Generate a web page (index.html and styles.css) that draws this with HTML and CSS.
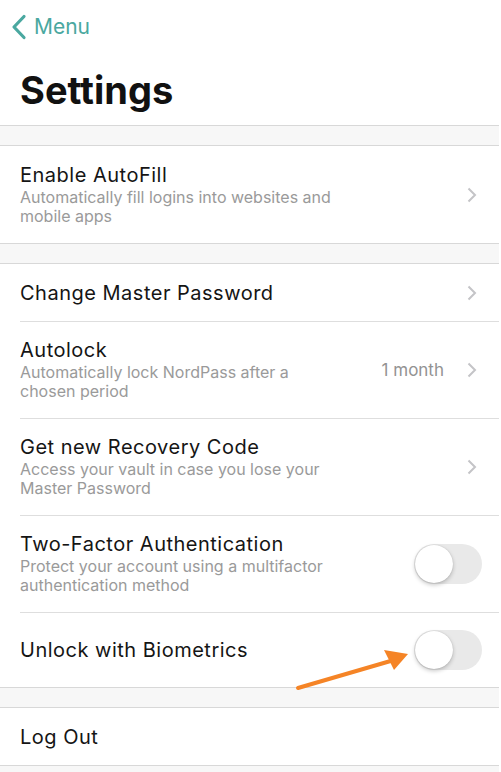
FILE: index.html
```html
<!DOCTYPE html>
<html>
<head>
<meta charset="utf-8">
<link rel="stylesheet" href="styles.css">
</head>
<body>
<div class="page">
  <header class="nav">
    <a class="back">
      <svg class="back-icon" width="16" height="26" viewBox="0 0 16 26"><path d="M13 2.5 L3 13 L13 23.5" fill="none" stroke="#4aa8a0" stroke-width="3.2" stroke-linecap="round" stroke-linejoin="round"/></svg>
      <span>Menu</span>
    </a>
    <h1 class="title">Settings</h1>
  </header>

  <div class="gap"></div>
  <section class="group">
    <div class="row tall">
      <div class="text">
        <div class="label">Enable AutoFill</div>
        <div class="sub">Automatically fill logins into websites and mobile apps</div>
      </div>
      <svg class="chev" width="10" height="16" viewBox="0 0 10 16"><path d="M1.5 1.5 L8 8 L1.5 14.5" fill="none" stroke="#c4c4c7" stroke-width="2"/></svg>
    </div>
  </section>

  <div class="gap"></div>
  <section class="group">
    <div class="row short">
      <div class="text"><div class="label">Change Master Password</div></div>
      <svg class="chev" width="10" height="16" viewBox="0 0 10 16"><path d="M1.5 1.5 L8 8 L1.5 14.5" fill="none" stroke="#c4c4c7" stroke-width="2"/></svg>
    </div>
    <div class="row tall">
      <div class="text">
        <div class="label">Autolock</div>
        <div class="sub">Automatically lock NordPass after a chosen period</div>
      </div>
      <span class="value">1 month</span>
      <svg class="chev" width="10" height="16" viewBox="0 0 10 16"><path d="M1.5 1.5 L8 8 L1.5 14.5" fill="none" stroke="#c4c4c7" stroke-width="2"/></svg>
    </div>
    <div class="row tall">
      <div class="text">
        <div class="label">Get new Recovery Code</div>
        <div class="sub">Access your vault in case you lose your Master Password</div>
      </div>
      <svg class="chev" width="10" height="16" viewBox="0 0 10 16"><path d="M1.5 1.5 L8 8 L1.5 14.5" fill="none" stroke="#c4c4c7" stroke-width="2"/></svg>
    </div>
    <div class="row tall">
      <div class="text">
        <div class="label">Two-Factor Authentication</div>
        <div class="sub">Protect your account using a multifactor authentication method</div>
      </div>
      <span class="toggle"><span class="knob"></span></span>
    </div>
    <div class="row mid">
      <div class="text"><div class="label">Unlock with Biometrics</div></div>
      <span class="toggle"><span class="knob"></span></span>
    </div>
  </section>

  <div class="gap"></div>
  <section class="group">
    <div class="row short">
      <div class="text"><div class="label">Log Out</div></div>
    </div>
  </section>
  <div class="gap"></div>

  <svg class="arrow" width="130" height="50" viewBox="0 0 130 50">
    <path d="M4 44 L100 16" stroke="#f58426" stroke-width="4" stroke-linecap="round"/>
    <path d="M114 10 L90 6 L100 26 Z" fill="#f58426"/>
  </svg>
</div>
</body>
</html>
```

FILE: styles.css
```css
* { box-sizing: border-box; }
html, body { margin: 0; padding: 0; background: #fff; }
body { font-family: Inter, "Noto Sans", sans-serif; color: #111; }
.page { width: 499px; position: relative; background: #fff; }
.nav { height: 125px; padding: 0; }
.back { display: flex; align-items: center; gap: 7px; padding: 13px 0 0 11px; color: #4aa8a0; font-size: 21px; height: 40px; }
.back span { line-height: 26px; }
.title { margin: 28px 0 0 20px; font-size: 38px; font-weight: 700; letter-spacing: 0; line-height: 44px; color: #111; }
.gap { height: 21px; background: #f7f7f7; border-top: 1px solid #d8d8d8; border-bottom: 1px solid #d8d8d8; }
.group { background: #fff; }
.row { display: flex; align-items: center; padding: 0 22px 0 20px; position: relative; }
.row + .row::before { content: ""; position: absolute; left: 20px; right: 0; top: 0; border-top: 1px solid #dedede; }
.row.tall { height: 97px; }
.row.short { height: 57px; }
.row.mid { height: 75px; }
.text { flex: 1; }
.label { font-size: 20px; line-height: 24px; color: #151515; letter-spacing: 0.5px; }
.sub { font-size: 16px; line-height: 19px; color: #9a9a9a; max-width: 315px; margin-top: 1px; }
.value { font-size: 17px; color: #939393; margin-right: 23px; }
.chev { flex: none; margin-right: 0; }
.toggle { width: 68px; height: 40px; border-radius: 20px; background: #e9e9e9; position: relative; margin-right: -5px; flex: none; }
.knob { position: absolute; left: 1px; top: 1px; width: 38px; height: 38px; border-radius: 50%; background: #fff; box-shadow: 0 2px 4px rgba(0,0,0,0.22), 0 0 1px rgba(0,0,0,0.2); }
.arrow { position: absolute; left: 294px; top: 644px; }
```
